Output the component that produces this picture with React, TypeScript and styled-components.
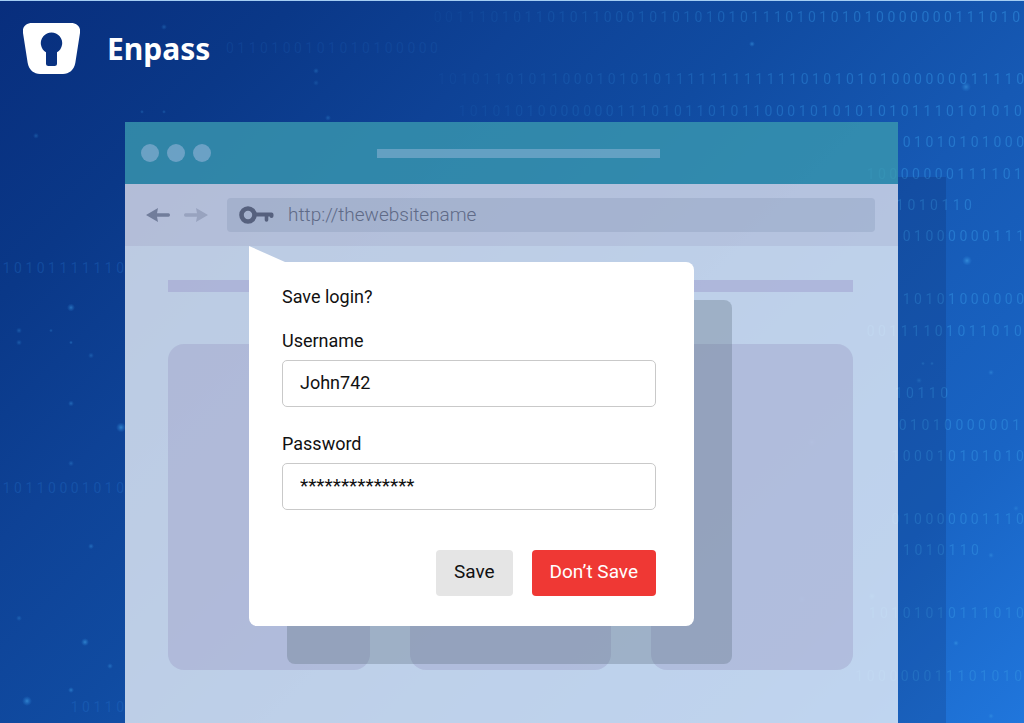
import React from "react";
import styled, { createGlobalStyle } from "styled-components";

const GlobalStyle = createGlobalStyle`
  *, *::before, *::after { box-sizing: border-box; }
  body { margin: 0; background: #0f459a; }
`;

const Page = styled.main`
  position: relative;
  display: flex;
  flex-direction: column;
  min-height: 100vh;
  overflow: hidden;
  border-top: 1px solid #a4cdf3;
  font-family: Roboto, "Open Sans", sans-serif;
  color: #111;
  background: linear-gradient(
    135deg,
    #082e7d 0%,
    #0a3888 17%,
    #0e4296 31%,
    #104ba1 45%,
    #1659b4 63%,
    #1964c4 83%,
    #2076dc 100%
  );
`;

const Backdrop = styled.div`
  position: absolute;
  inset: 0;
  display: grid;
  grid-template-rows: repeat(23, 1fr);
  pointer-events: none;
`;

type Tone = "left" | "right" | "faint";

const toneColor: Record<Tone, string> = {
  left: "rgba(40, 120, 210, 0.3)",
  right: "rgba(52, 148, 228, 0.5)",
  faint: "rgba(50, 130, 220, 0.14)",
};

const BinaryRow = styled.div<{ $line: number; $end: number; $tone: Tone }>`
  grid-row: ${(p) => p.$line};
  grid-column: 1;
  display: flex;
  align-items: center;
  justify-content: flex-end;
  justify-self: ${(p) => (p.$tone === "left" ? "start" : "stretch")};
  width: ${(p) => (p.$tone === "left" ? "124px" : "auto")};
  padding-right: ${(p) => p.$end}px;
  overflow: hidden;
  white-space: nowrap;
  font-size: 14px;
  line-height: 20px;
  color: ${(p) => toneColor[p.$tone]};
  mask-image: ${(p) =>
    p.$tone === "right" ? "linear-gradient(90deg, transparent 35%, rgba(0,0,0,.4) 60%, #000 88%)" : "none"};
`;

const Sparks = styled.svg`
  position: absolute;
  inset: 0;
  width: 100%;
  height: 100%;
  pointer-events: none;
`;

const Brand = styled.header`
  position: relative;
  display: flex;
  align-items: center;
  gap: 27px;
  height: 121px;
  padding: 0 23px 26px;
`;

const BrandName = styled.h1`
  margin: 0;
  font-family: "Noto Sans", "Open Sans", sans-serif;
  font-size: 30px;
  line-height: 40px;
  font-weight: 700;
  color: #fff;
`;

const BrowserWindow = styled.section`
  position: relative;
  flex: 1;
  display: flex;
  flex-direction: column;
  margin: 0 126px 0 125px;
  box-shadow: 48px 55px 0 rgba(4, 20, 70, 0.16);
`;

const TitleBar = styled.div`
  display: flex;
  align-items: center;
  height: 62px;
  padding: 0 2px 0 16px;
  background: rgba(57, 152, 175, 0.8);
`;

const Dots = styled.div`
  flex: 1;
  display: flex;
  gap: 8px;
`;

const Dot = styled.span`
  width: 18px;
  height: 18px;
  border-radius: 50%;
  background: rgba(165, 190, 225, 0.5);
`;

const TitleLine = styled.div`
  flex: 0 1 283px;
  height: 9px;
  background: rgba(165, 190, 225, 0.45);
`;

const Spacer = styled.div`
  flex: 1;
`;

const Toolbar = styled.div`
  display: flex;
  align-items: center;
  height: 62px;
  padding: 0 23px 0 21px;
  background: rgba(221, 222, 235, 0.8);
`;

const NavButton = styled.button<{ $dim?: boolean }>`
  display: flex;
  margin: 0 14px 0 0;
  padding: 0;
  border: 0;
  background: none;
  color: ${(p) => (p.$dim ? "#98a3bf" : "#717d9b")};
`;

const AddressBar = styled.label`
  flex: 1;
  display: flex;
  align-items: center;
  gap: 14px;
  height: 34px;
  margin-left: 5px;
  padding: 0 12px;
  border-radius: 4px;
  color: #56617e;
  background: rgba(120, 138, 170, 0.25);
`;

const AddressInput = styled.input`
  flex: 1;
  min-width: 0;
  padding: 0;
  border: 0;
  outline: 0;
  background: none;
  font: inherit;
  font-size: 19px;
  font-weight: 300;
  line-height: 24px;
  color: #5f6a87;
`;

const Viewport = styled.div`
  position: relative;
  flex: 1;
  padding: 34px 45px 52px 43px;
  background: rgba(233, 239, 247, 0.8);
`;

const Rule = styled.div`
  height: 12px;
  background: rgba(158, 158, 206, 0.5);
`;

const Cards = styled.div`
  display: grid;
  grid-template-columns: repeat(3, 1fr);
  gap: 40px;
  margin-top: 52px;
`;

const Card = styled.div`
  height: 326px;
  border-radius: 16px;
  background: rgba(158, 160, 200, 0.42);
`;

const Popup = styled.form`
  position: absolute;
  top: 16px;
  left: 124px;
  width: 445px;
  padding: 24px 38px 30px 33px;
  border-radius: 0 8px 8px 8px;
  background: #fff;
  box-shadow: 38px 38px 0 rgba(90, 108, 125, 0.32);
  font-size: 18px;
  line-height: 22px;

  &::before {
    content: "";
    position: absolute;
    left: 0;
    bottom: 100%;
    width: 36px;
    height: 16px;
    background: #fff;
    clip-path: polygon(0 0, 100% 100%, 0 100%);
  }
`;

const PopupTitle = styled.h2`
  margin: 0 0 22px;
  font: inherit;
`;

const Field = styled.div`
  display: flex;
  flex-direction: column;
  gap: 8px;
  margin-bottom: 26px;
`;

const TextInput = styled.input<{ $masked?: boolean }>`
  width: 100%;
  height: 47px;
  padding: 0 17px 2px;
  border: 1px solid #c9c9c9;
  border-radius: 5px;
  outline: 0;
  background: #fff;
  font: inherit;
  font-size: ${(p) => (p.$masked ? "19px" : "18px")};
  color: #111;
`;

const Actions = styled.div`
  display: flex;
  justify-content: flex-end;
  gap: 19px;
  padding-top: 14px;
`;

const Button = styled.button<{ $danger?: boolean }>`
  height: 46px;
  padding: 0 18px 2px;
  border: 0;
  border-radius: 4px;
  font: inherit;
  font-size: 19px;
  color: ${(p) => (p.$danger ? "#fff" : "#111")};
  background: ${(p) => (p.$danger ? "#ef3834" : "#e5e5e5")};
`;

type Bits = { line: number; bits: string; end?: number; tone?: Tone };

const binaryRows: Bits[] = [
  { line: 1, bits: "0011101011010110001010101010111010101010000000111010", end: 4 },
  { line: 2, bits: "0110100101010100000", end: 586, tone: "faint" },
  { line: 3, bits: "1010110101100010101011111111111101010101000000011110" },
  { line: 4, bits: "10101010000000111010110101100010101010101110101010", end: 2 },
  { line: 5, bits: "01010101000" },
  { line: 6, bits: "10000000111101", end: 2 },
  { line: 7, bits: "1010110", end: 52 },
  { line: 8, bits: "01000000111" },
  { line: 10, bits: "10101000000" },
  { line: 11, bits: "00111101011010", end: 2 },
  { line: 13, bits: "10110", end: 76 },
  { line: 14, bits: "01010000001", end: 4 },
  { line: 15, bits: "100010101010" },
  { line: 17, bits: "010000001110" },
  { line: 18, bits: "1010110", end: 45 },
  { line: 20, bits: "10101010111010" },
  { line: 22, bits: "100000011101010", end: 2 },
  { line: 9, bits: "10101111110", tone: "left" },
  { line: 16, bits: "10110001010", tone: "left" },
  { line: 23, bits: "10110", tone: "left" },
];

const sparks: [number, number, number, number][] = [
  [752, 43, 2, 0.5], [966, 86, 4, 0.5], [967, 260, 4, 0.6], [919, 380, 2, 0.35], [991, 372, 2, 0.4],
  [71, 307, 3, 0.5], [121, 427, 4, 0.6], [85, 642, 3, 0.6], [71, 690, 2, 0.5], [27, 701, 4, 0.6],
  [110, 666, 2, 0.4], [71, 403, 2, 0.4], [91, 355, 2, 0.3], [36, 135, 2, 0.3], [164, 26, 2, 0.3],
  [956, 643, 2, 0.5], [991, 716, 2, 0.4], [991, 555, 2, 0.4], [812, 442, 3, 0.4], [91, 546, 2, 0.4],
  [1016, 508, 2, 0.3], [19, 330, 2, 0.3], [19, 342, 2, 0.3], [51, 330, 1, 0.3], [71, 342, 1, 0.4],
  [19, 618, 2, 0.3], [71, 463, 2, 0.3], [923, 363, 1, 0.4], [932, 363, 1, 0.4], [802, 599, 3, 0.3],
  [872, 596, 3, 0.4], [316, 70, 2, 0.3], [316, 82, 2, 0.2], [328, 117, 2, 0.3], [142, 111, 1, 0.3],
  [164, 111, 1, 0.3],
];

function EnpassLogo() {
  return (
    <svg width="57" height="51" viewBox="0 0 57 51" role="img" aria-label="Enpass logo">
      <path
        fill="#fff"
        fillRule="evenodd"
        d="M9 0H48C54 0 58 4 57 10L52.300 40C51 47 46 51 40 51H17C11 51 6 47 4.700 40L0 10C-1 4 3 0 9 0ZM23 29.300V40.500Q23 43 25.500 43H31.500Q34 43 34 40.500V29.300A10.700 10.700 0 1 0 23 29.300Z"
      />
    </svg>
  );
}

function ArrowIcon({ flip }: { flip?: boolean }) {
  return (
    <svg width="24" height="14" viewBox="0 0 24 14" aria-hidden="true">
      <path
        fill="currentColor"
        transform={flip ? "rotate(180 12 7)" : undefined}
        d="M0 7L12 0L11 5.200H22.500Q24 5.200 24 7T22.500 8.800H11L12 14Z"
      />
    </svg>
  );
}

function KeyIcon() {
  return (
    <svg width="35" height="18" viewBox="0 0 35 18" aria-hidden="true">
      <g fill="none" stroke="currentColor">
        <circle cx="9" cy="9" r="6.500" strokeWidth="4.600" />
        <path strokeWidth="4" strokeLinecap="round" strokeLinejoin="round" d="M16 8.500H32.500V10" />
        <path strokeWidth="3.600" strokeLinecap="round" d="M27.500 9V14" />
      </g>
    </svg>
  );
}

export default function App() {
  return (
    <>
      <GlobalStyle />
      <Page>
        <Backdrop aria-hidden="true">
          {binaryRows.map(({ line, bits, end = 0, tone = "right" }) => (
            <BinaryRow key={line} $line={line} $end={end} $tone={tone}>
              {bits.split("").join(" ")}
            </BinaryRow>
          ))}
        </Backdrop>
        <Sparks viewBox="0 0 1024 723" preserveAspectRatio="none" aria-hidden="true">
          <defs>
            <radialGradient id="spark">
              <stop offset="0" stopColor="#45a8ec" />
              <stop offset="1" stopColor="#2a8ae0" stopOpacity="0" />
            </radialGradient>
          </defs>
          {sparks.map(([x, y, r, o]) => (
            <circle key={`${x}-${y}`} cx={x} cy={y} r={r + 1} opacity={o} fill="url(#spark)" />
          ))}
        </Sparks>

        <Brand>
          <EnpassLogo />
          <BrandName>Enpass</BrandName>
        </Brand>

        <BrowserWindow>
          <TitleBar>
            <Dots>
              <Dot />
              <Dot />
              <Dot />
            </Dots>
            <TitleLine />
            <Spacer />
          </TitleBar>
          <Toolbar>
            <NavButton type="button" aria-label="Back">
              <ArrowIcon />
            </NavButton>
            <NavButton type="button" aria-label="Forward" $dim>
              <ArrowIcon flip />
            </NavButton>
            <AddressBar>
              <KeyIcon />
              <AddressInput type="text" aria-label="Address" defaultValue="http://thewebsitename" />
            </AddressBar>
          </Toolbar>
          <Viewport>
            <Rule />
            <Cards>
              <Card />
              <Card />
              <Card />
            </Cards>
            <Popup onSubmit={(e) => e.preventDefault()}>
              <PopupTitle>Save login?</PopupTitle>
              <Field>
                <label htmlFor="username">Username</label>
                <TextInput id="username" type="text" defaultValue="John742" />
              </Field>
              <Field>
                <label htmlFor="password">Password</label>
                <TextInput id="password" type="text" $masked defaultValue="**************" />
              </Field>
              <Actions>
                <Button type="submit">Save</Button>
                <Button type="button" $danger>
                  Don’t Save
                </Button>
              </Actions>
            </Popup>
          </Viewport>
        </BrowserWindow>
      </Page>
    </>
  );
}
